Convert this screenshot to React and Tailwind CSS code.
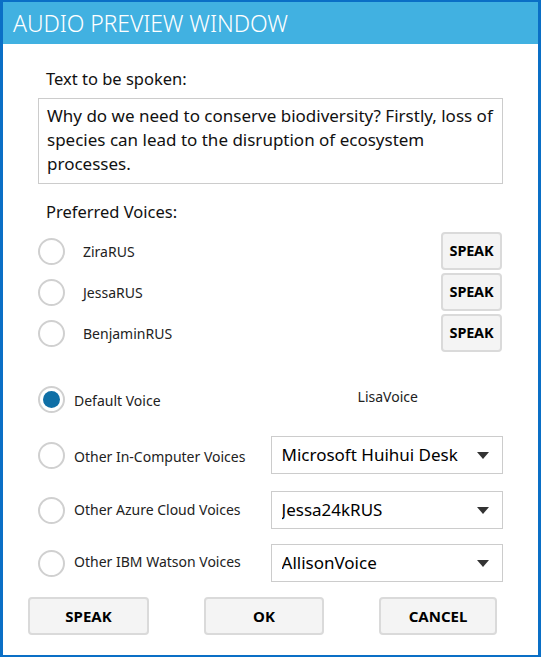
import React from "react";

const font = { fontFamily: '"Noto Sans", "Open Sans", sans-serif' };

function Radio({ checked }) {
  return (
    <div className="w-[27px] h-[27px] rounded-full border-2 border-[#d0d0d0] bg-white flex items-center justify-center shrink-0">
      {checked && <div className="w-[17px] h-[17px] rounded-full bg-[#0f6fa6]" />}
    </div>
  );
}

function SmallSpeak() {
  return (
    <button className="w-[61px] h-[38px] rounded-[4px] border-2 border-[#dadada] bg-[#f4f4f4] text-[14.5px] font-bold text-black tracking-[-0.2px]">
      SPEAK
    </button>
  );
}

function Select({ value }) {
  return (
    <div className="w-[233px] h-[38px] border border-[#cccccc] bg-white flex items-center pl-[10px] pr-[13px]">
      <span className="flex-1 overflow-hidden whitespace-nowrap text-[17px] text-black">{value}</span>
      <svg width="12" height="7" viewBox="0 0 12 7" className="ml-2 shrink-0">
        <path d="M0 0 L12 0 L6 7 Z" fill="#333" />
      </svg>
    </div>
  );
}

function BigBtn({ children, w }) {
  return (
    <button
      className={`${w} h-[38px] rounded-[4px] border-2 border-[#dadada] bg-[#f4f4f4] text-[15px] font-bold text-black`}
    >
      {children}
    </button>
  );
}

export default function App() {
  return (
    <div
      className="w-[541px] h-[657px] bg-white border-t-2 border-l-[3px] border-r-[3px] border-b-[2px] border-[#0a6fc6] flex flex-col overflow-hidden"
      style={font}
    >
      <div className="h-[42px] bg-[#41b1e1] flex items-center pl-[10px] shrink-0">
        <span className="text-white text-[23px] font-light tracking-[-0.1px] leading-none">AUDIO PREVIEW WINDOW</span>
      </div>
      <div className="flex flex-col pl-[35px] pr-[35px]">
        <div className="mt-[23px] pl-[8px] text-[16.5px] text-[#111] leading-[24px]">Text to be spoken:</div>
        <div className="mt-[7px] w-[465px] h-[86px] border border-[#cccccc] pl-[8px] pr-[4px] pt-[5px] text-[17px] leading-[24px] text-[#111]">
          Why do we need to conserve biodiversity? Firstly, loss of species can lead to the disruption of ecosystem processes.
        </div>
        <div className="mt-[16px] pl-[8px] text-[16.5px] text-[#111] leading-[24px]">Preferred Voices:</div>
        <div className="mt-[8px] flex flex-col gap-[3px]">
          {["ZiraRUS", "JessaRUS", "BenjaminRUS"].map((n) => (
            <div key={n} className="flex items-center h-[38px] pr-[1px]">
              <Radio />
              <span className="ml-[18px] text-[14px] text-[#222] flex-1">{n}</span>
              <SmallSpeak />
            </div>
          ))}
        </div>
        <div className="mt-[32px] flex items-center h-[30px]">
          <Radio checked />
          <span className="ml-[9px] text-[14px] text-[#222] mt-[2px]">Default Voice</span>
          <span className="ml-[197px] text-[14px] text-[#222] -mt-[6px]">LisaVoice</span>
        </div>
        <div className="mt-[22px] flex items-center h-[38px]">
          <Radio />
          <span className="ml-[9px] text-[14px] text-[#222] w-[197px] mt-[3px]">Other In-Computer Voices</span>
          <Select value="Microsoft Huihui Desk" />
        </div>
        <div className="mt-[17px] flex items-center h-[38px]">
          <Radio />
          <span className="ml-[9px] text-[14px] text-[#222] w-[197px] -mt-[1px]">Other Azure Cloud Voices</span>
          <Select value="Jessa24kRUS" />
        </div>
        <div className="mt-[15px] flex items-center h-[38px]">
          <Radio />
          <span className="ml-[9px] text-[14px] text-[#222] w-[197px] -mt-[3px]">Other IBM Watson Voices</span>
          <Select value="AllisonVoice" />
        </div>
      </div>
      <div className="mt-[15px] flex pl-[25px]">
        <BigBtn w="w-[121px]">SPEAK</BigBtn>
        <div className="ml-[55px]"><BigBtn w="w-[120px]">OK</BigBtn></div>
        <div className="ml-[55px]"><BigBtn w="w-[118px]">CANCEL</BigBtn></div>
      </div>
    </div>
  );
}
